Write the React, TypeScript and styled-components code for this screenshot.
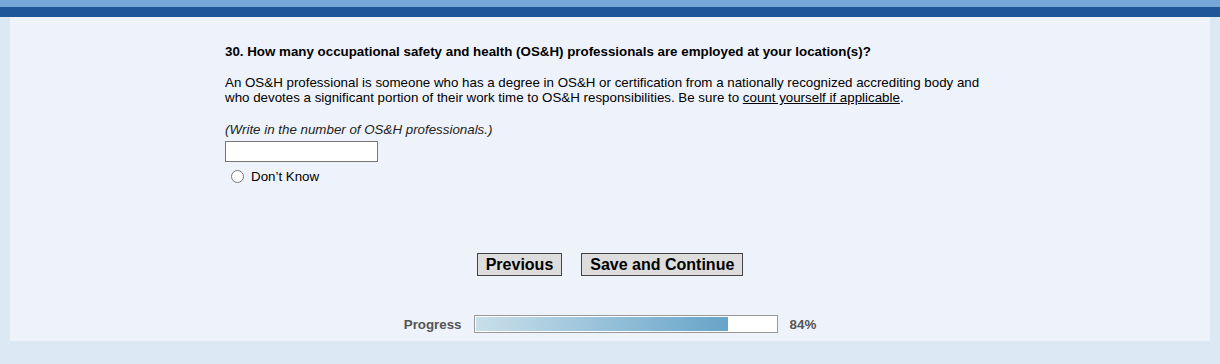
import React from "react"
import styled, { createGlobalStyle } from "styled-components"

const GlobalStyle = createGlobalStyle`
  html, body {
    margin: 0;
    padding: 0;
    background: #dce8f4;
    font-family: "Liberation Sans", Arial, sans-serif;
    color: #000;
  }
`

const TopBand = styled.div`
  height: 7px;
  background: #77a7d6;
`

const Header = styled.div`
  height: 10px;
  background: #1f5699;
`

const Page = styled.div`
  padding: 0 10px 23px;
`

const Panel = styled.main`
  background: #eef3fb;
  height: 324px;
  display: flex;
  flex-direction: column;
`

const Content = styled.section`
  width: 770px;
  margin: 0 auto;
  padding-top: 27px;
  font-size: 10pt;
  line-height: 15px;
`

const Question = styled.h2`
  margin: 0 0 16px;
  font-size: 10pt;
  font-weight: bold;
`

const Body = styled.p`
  margin: 0 0 17px;
`

const Underlined = styled.span`
  text-decoration: underline;
`

const Hint = styled.p`
  margin: 0 0 4px;
  font-style: italic;
  color: #222;
`

const NumberInput = styled.input`
  box-sizing: border-box;
  width: 153px;
  height: 21px;
  border: 1px solid #767676;
  background: #fff;
  margin: 0;
  padding: 0 2px;
  display: block;
`

const RadioRow = styled.label`
  display: flex;
  align-items: center;
  margin-top: 7px;
  padding-left: 6px;
`

const Radio = styled.input`
  width: 13px;
  height: 13px;
  margin: 0 7px 0 0;
`

const ButtonRow = styled.div`
  display: flex;
  justify-content: center;
  gap: 19px;
  margin-top: 69px;
`

const NavButton = styled.button`
  font-family: "Liberation Sans", Arial, sans-serif;
  font-size: 16px;
  font-weight: bold;
  height: 23px;
  padding: 0 8px;
  background: #dddddd;
  border: 1px solid #444;
  border-radius: 0;
  color: #000;
  line-height: 21px;
`

const ProgressRow = styled.div`
  display: flex;
  justify-content: center;
  align-items: center;
  margin-top: 39px;
  font-size: 10pt;
  font-weight: bold;
  color: #555;
`

const ProgressLabel = styled.span`
  margin-right: 12px;
`

const Track = styled.div`
  box-sizing: border-box;
  width: 304px;
  height: 18px;
  border: 1px solid #999;
  background: #fff;
  padding: 1px;
`

const Fill = styled.div`
  height: 100%;
  background: linear-gradient(to right, #c9dfea, #66a4c9);
`

const Percent = styled.span`
  margin-left: 12px;
`

export default function App() {
  const progress = 84
  return (
    <>
      <GlobalStyle />
      <TopBand />
      <Header />
      <Page>
        <Panel>
          <Content>
            <Question>
              30. How many occupational safety and health (OS&amp;H) professionals are employed at your location(s)?
            </Question>
            <Body>
              An OS&amp;H professional is someone who has a degree in OS&amp;H or certification from a nationally
              recognized accrediting body and who devotes a significant portion of their work time to OS&amp;H
              responsibilities. Be sure to <Underlined>count yourself if applicable</Underlined>.
            </Body>
            <Hint>(Write in the number of OS&amp;H professionals.)</Hint>
            <NumberInput type="text" />
            <RadioRow>
              <Radio type="radio" name="dk" />
              Don’t Know
            </RadioRow>
          </Content>
          <ButtonRow>
            <NavButton>Previous</NavButton>
            <NavButton>Save and Continue</NavButton>
          </ButtonRow>
          <ProgressRow>
            <ProgressLabel>Progress</ProgressLabel>
            <Track>
              <Fill style={{ width: `${progress}%` }} />
            </Track>
            <Percent>{progress}%</Percent>
          </ProgressRow>
        </Panel>
      </Page>
    </>
  )
}
